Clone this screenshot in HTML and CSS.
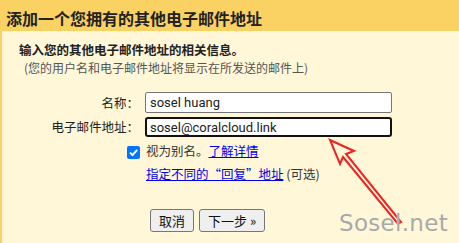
FILE: index.html
```html
<!DOCTYPE html>
<html lang="zh-CN">
<head>
<meta charset="utf-8">
<title>添加一个您拥有的其他电子邮件地址</title>
<link rel="stylesheet" href="styles.css">
</head>
<body>
<div class="dialog">
  <h1 class="title">添加一个您拥有的其他电子邮件地址</h1>
  <div class="panel">
    <p class="intro">输入您的其他电子邮件地址的相关信息。</p>
    <p class="hint">(您的用户名和电子邮件地址将显示在所发送的邮件上)</p>
    <div class="form">
      <label class="lbl">名称：</label>
      <div class="field"><input class="input" type="text" value="sosel huang"></div>
      <label class="lbl">电子邮件地址：</label>
      <div class="field"><input class="input focused" type="text" value="sosel@coralcloud.link"></div>
      <div class="lbl"><span class="check"><svg width="13" height="13" viewBox="0 0 13 13"><rect x="0" y="0" width="13" height="13" rx="2" fill="#0075ff"/><path d="M3 6.6 L5.5 9 L10.2 3.8" fill="none" stroke="#fff" stroke-width="2"/></svg></span></div>
      <div class="text">视为别名。<a class="link" href="#">了解详情</a></div>
      <div></div>
      <div class="text"><a class="link" href="#">指定不同的“回复”地址</a> (可选)</div>
    </div>
    <div class="buttons">
      <button class="btn">取消</button>
      <button class="btn">下一步 »</button>
    </div>
  </div>
</div>
<svg class="arrow" width="459" height="243" viewBox="0 0 459 243">
  <path d="M330 140 L354 151 L346 154 L401 222 L398 224 L343 157 L340 164 Z" fill="none" stroke="#ee2222" stroke-width="2" stroke-linejoin="miter"/>
</svg>
<div class="watermark">Sosel.net</div>
</body>
</html>
```
FILE: styles.css
```css
html, body {
  margin: 0;
  padding: 0;
}
body {
  width: 459px;
  height: 243px;
  overflow: hidden;
  position: relative;
  background: #fad163;
  font-family: "Liberation Sans", Arial, "Noto Sans CJK SC", sans-serif;
  color: #222;
}
.dialog {
  display: flex;
  flex-direction: column;
  height: 100%;
}
.title {
  margin: 0;
  height: 31px;
  box-sizing: border-box;
  padding: 6px 0 0 6px;
  font-size: 16px;
  line-height: 24px;
  font-weight: bold;
  font-family: "Noto Sans CJK SC", sans-serif;
  color: #222;
}
.panel {
  flex: 1;
  margin-left: 2px;
  background: #fff7d7;
  padding-top: 9px;
}
.intro {
  margin: 0 0 0 17px;
  font-size: 12.5px;
  line-height: 19px;
  font-weight: bold;
  font-family: "Noto Sans CJK SC", sans-serif;
  color: #222;
}
.hint {
  margin: 0 0 0 22px;
  font-size: 12px;
  line-height: 17px;
  color: #555;
  font-family: "Noto Sans CJK SC", sans-serif;
}
.form {
  display: grid;
  grid-template-columns: 137px 247px;
  column-gap: 6px;
  row-gap: 4px;
  align-items: center;
  margin-top: 16px;
}
.lbl {
  text-align: right;
  font-size: 12.5px;
  color: #222;
  font-family: "Noto Sans CJK SC", sans-serif;
  line-height: 16px;
}
.check {
  display: inline-block;
  vertical-align: middle;
  width: 13px;
  height: 13px;
  margin-right: -1px;
}
.check svg {
  display: block;
}
.field {
  display: flex;
}
.input {
  width: 247px;
  height: 21px;
  box-sizing: border-box;
  border: 1px solid #767676;
  border-radius: 2px;
  padding: 0 4px;
  font-family: Roboto, "Liberation Sans", sans-serif;
  font-size: 13px;
  color: #222;
  background: #fff;
  margin: 0;
}
.focused {
  border: 2px solid #111;
  border-radius: 3px;
  padding: 0 3px;
  height: 20px;
}
.text {
  font-size: 12.5px;
  line-height: 19px;
  color: #333;
  font-family: "Noto Sans CJK SC", sans-serif;
  margin-left: 1px;
}
.link {
  color: #0000ee;
  text-decoration: underline;
}
.buttons {
  display: flex;
  gap: 5px;
  margin: 26px 0 0 148px;
}
.btn {
  height: 23px;
  box-sizing: border-box;
  border: 1px solid #767676;
  border-radius: 3px;
  background: #efefef;
  padding: 0 8px;
  font-size: 13px;
  font-family: "Noto Sans CJK SC", sans-serif;
  color: #111;
  line-height: 20px;
}
.arrow {
  position: absolute;
  left: 0;
  top: 0;
  pointer-events: none;
}
.watermark {
  position: absolute;
  left: 339px;
  top: 210px;
  font-family: "DejaVu Sans", sans-serif;
  font-size: 23px;
  color: #a8a8a8;
  text-shadow: 0 0 1px #fff;
  letter-spacing: 0.3px;
}
```
